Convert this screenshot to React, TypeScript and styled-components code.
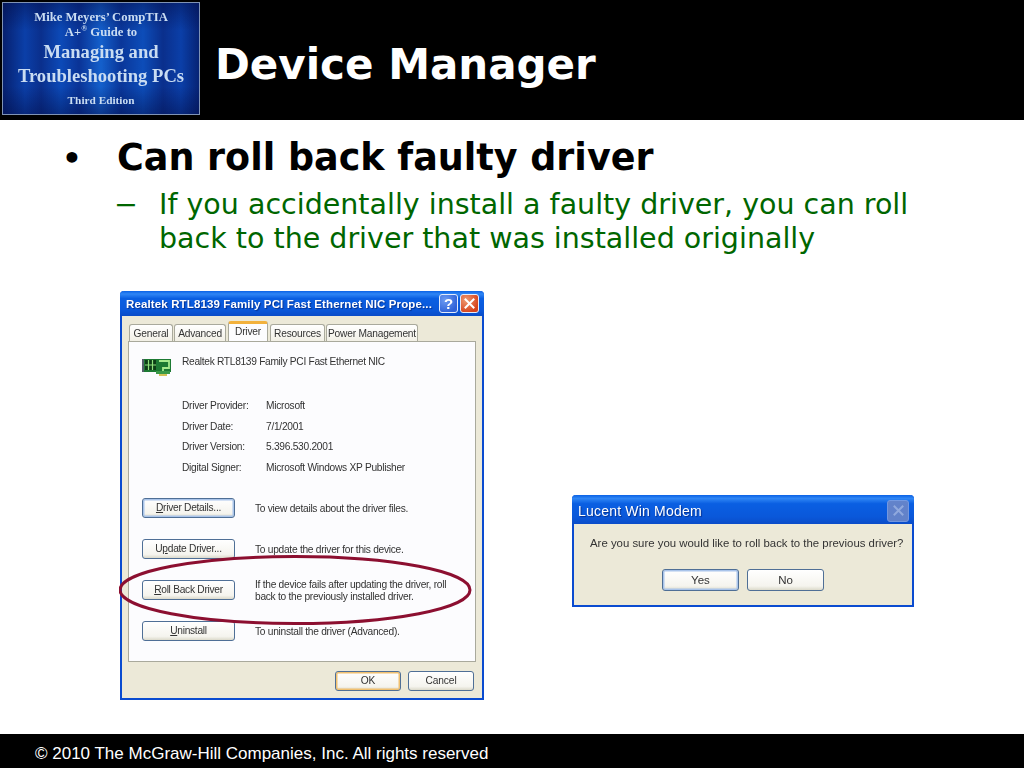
import React from 'react';
import styled, {createGlobalStyle, css} from 'styled-components';

const GlobalStyle = createGlobalStyle`
  html, body {
    margin: 0;
    padding: 0;
    background: #fff;
  }
`;

const XP_FONT = `"Liberation Sans", Arial, sans-serif`;

const Slide = styled.div`
  width: 1024px;
  height: 768px;
  background: #fff;
  display: flex;
  flex-direction: column;
  overflow: hidden;
  font-family: "DejaVu Sans", sans-serif;
`;

const Header = styled.header`
  height: 120px;
  background: #000;
  display: flex;
  align-items: flex-start;
  padding: 2px 0 0 2px;
  box-sizing: border-box;
`;

const Badge = styled.div`
  width: 198px;
  height: 113px;
  box-sizing: border-box;
  border: 1px solid #7f93b5;
  background:
    linear-gradient(180deg, rgba(2, 12, 70, 0.45) 0%, rgba(2, 12, 70, 0) 25%, rgba(2, 12, 70, 0) 75%, rgba(2, 12, 70, 0.45) 100%),
    linear-gradient(90deg,
      #06206f 0px, #0b3fa8 22px, #0a2f8c 38px, #0c4ab8 58px, #0a3396 76px,
      #1460cc 98px, #0a3699 118px, #0d4db9 140px, #0a2f8c 160px, #0b3fa8 178px, #06206f 198px);
  color: #c9dcf2;
  font-family: "Liberation Serif", serif;
  font-weight: bold;
  text-align: center;
  display: flex;
  flex-direction: column;
  align-items: center;
  padding-top: 7px;
  filter: blur(0.3px);
`;

const BadgeSmall = styled.div`
  font-size: 12.700px;
  line-height: 15px;
  white-space: nowrap;

  sup {
    font-size: 8px;
    line-height: 0;
  }
`;

const BadgeLarge = styled.div`
  font-size: 18.600px;
  line-height: 24px;
  white-space: nowrap;
`;

const BadgeEdition = styled.div`
  font-size: 11.300px;
  line-height: 14px;
  margin-top: 5px;
`;

const Title = styled.h1`
  margin: 0 0 0 15px;
  font-size: 42px;
  line-height: 50px;
  padding-top: 38px;
  color: #fff;
  font-weight: bold;
  white-space: nowrap;
`;

const Bullets = styled.section`
  padding: 15px 0 0 62px;
  height: 157px;
  box-sizing: border-box;
`;

const BulletRow = styled.div`
  display: flex;
  font-size: 36.500px;
  line-height: 46px;
  font-weight: bold;
  color: #000;
`;

const BulletMark = styled.span`
  width: 55px;
  flex: none;
  font-size: 31px;
`;

const SubRow = styled.div`
  display: flex;
  margin: 7px 0 0 52px;
  font-size: 28.500px;
  line-height: 34px;
  color: #006600;
`;

const SubMark = styled.span`
  width: 45px;
  flex: none;
`;

const Stage = styled.main`
  display: flex;
  align-items: flex-start;
  padding: 14px 0 0 120px;
  gap: 88px;
  flex: 1;
`;

const XpWindow = styled.div<{$width: number; $height: number; $offset?: number}>`
  width: ${p => p.$width}px;
  height: ${p => p.$height}px;
  flex: none;
  margin-top: ${p => p.$offset ?? 0}px;
  box-sizing: border-box;
  position: relative;
  background: #ece9d8;
  border: 2px solid #0a4bd0;
  border-top: 0;
  border-radius: 4px 4px 0 0;
  display: flex;
  flex-direction: column;
  font-family: ${XP_FONT};
  color: #333;
  filter: blur(0.35px);
`;

const TitleBar = styled.div<{$height: number; $dropped?: boolean}>`
  height: ${p => p.$height}px;
  box-sizing: border-box;
  flex: none;
  margin: 0 -2px;
  border-radius: 4px 4px 0 0;
  background: linear-gradient(180deg, #0a62e6 0%, #2f86f5 12%, #0a5fe2 30%, #0a58da 75%, #0a4cc8 100%);
  display: flex;
  align-items: center;
  padding: ${p => (p.$dropped ? 2 : 0)}px 5px 0 6px;
  color: #fff;
`;

const TitleText = styled.div<{$large?: boolean}>`
  flex: 1;
  min-width: 0;
  white-space: nowrap;
  font-weight: ${p => (p.$large ? 'normal' : 'bold')};
  font-size: ${p => (p.$large ? '14px' : '11.5px')};
  letter-spacing: ${p => (p.$large ? '0.2px' : '0.13px')};
  text-shadow: 1px 1px 1px rgba(0, 20, 90, 0.6);
`;

const CaptionButton = styled.div<{$kind: 'help' | 'close' | 'disabled'}>`
  width: 19px;
  height: 19px;
  flex: none;
  margin-left: 2px;
  border-radius: 3px;
  border: 1px solid #e4ecfb;
  box-sizing: border-box;
  display: flex;
  align-items: center;
  justify-content: center;
  color: #fff;
  font: bold 15px ${XP_FONT};
  ${p => p.$kind === 'help' && css`
    background: radial-gradient(circle at 30% 30%, #6d9cf2, #2f62d8 75%);
  `}
  ${p => p.$kind === 'close' && css`
    background: radial-gradient(circle at 30% 30%, #ee9a72, #d6431c 75%);
  `}
  ${p => p.$kind === 'disabled' && css`
    width: 22px;
    height: 22px;
    border-color: #7f9ee0;
    background: #6c87c8;
    opacity: 0.9;
  `}
`;

const Tabs = styled.div`
  display: flex;
  align-items: flex-end;
  height: 25px;
  padding: 6px 0 0 7px;
  box-sizing: border-box;
  flex: none;
`;

const Tab = styled.div<{$active?: boolean; $width: number}>`
  width: ${p => p.$width}px;
  height: ${p => (p.$active ? 20 : 17)}px;
  box-sizing: border-box;
  font-size: 10.200px;
  letter-spacing: -0.2px;
  line-height: 18px;
  text-align: center;
  white-space: nowrap;
  background: ${p => (p.$active ? '#fcfcfe' : 'linear-gradient(180deg, #fff, #f2f0e6)')};
  border: 1px solid #a9a99c;
  border-bottom: 0;
  border-radius: 3px 3px 0 0;
  margin-right: 1px;
  ${p => p.$active && css`
    border-top: 3px solid #f2b13c;
    line-height: 15px;
    margin: 0 2px 0 1px;
  `}
`;

const TabPanel = styled.div`
  margin: 0 6px;
  height: 321px;
  flex: none;
  box-sizing: border-box;
  background: #fcfcfe;
  border: 1px solid #a9a99c;
  padding: 14px 0 0 13px;
  font-size: 10.200px;
  letter-spacing: -0.27px;
`;

const DeviceRow = styled.div`
  display: flex;
  align-items: flex-start;
  gap: 10px;
  height: 43px;
  line-height: 12px;
  letter-spacing: -0.3px;
`;

const InfoGrid = styled.dl`
  margin: 0 0 0 40px;
  display: grid;
  grid-template-columns: 84px 1fr;
  grid-auto-rows: 20.700px;
  height: 84px;
  line-height: 14px;

  dt, dd {
    margin: 0;
    white-space: nowrap;
  }
`;

const ActionRow = styled.div`
  display: flex;
  align-items: center;
  height: 41px;
  line-height: 12px;
`;

const ActionList = styled.div`
  margin-top: 4px;
`;

const XpButton = styled.div<{$width: number; $tone?: 'focus' | 'default'}>`
  width: ${p => p.$width}px;
  height: 20px;
  flex: none;
  box-sizing: border-box;
  border: 1px solid #4f6f96;
  border-radius: 3px;
  background: linear-gradient(180deg, #fff 0%, #f5f4ee 80%, #dcdacb 100%);
  text-align: center;
  line-height: 17px;
  white-space: nowrap;
  ${p => p.$tone === 'focus' && css`
    box-shadow: inset 0 0 0 1.500px #a9c4ea;
  `}
  ${p => p.$tone === 'default' && css`
    box-shadow: inset 0 0 0 1.500px #f0c070;
  `}

  u {
    text-underline-offset: 1px;
  }
`;

const ActionText = styled.div`
  margin-left: 20px;
  padding-top: 2px;
  white-space: nowrap;
`;

const WindowFooter = styled.div`
  display: flex;
  justify-content: flex-end;
  gap: 7px;
  padding: 9px 8px 0 0;
  font-size: 10.200px;
  letter-spacing: -0.1px;
`;

const Oval = styled.svg`
  position: absolute;
  left: -3px;
  top: 262px;
`;

const Prompt = styled.div`
  font-size: 11.400px;
  line-height: 14px;
  padding: 12px 0 0 16px;
  white-space: nowrap;
`;

const PromptButtons = styled.div`
  display: flex;
  gap: 8px;
  padding: 19px 0 0 88px;
  font-size: 11.500px;

  ${XpButton} {
    height: 22px;
    line-height: 20px;
  }
`;

const Footer = styled.footer`
  height: 34px;
  flex: none;
  background: #000;
  color: #fff;
  font-family: "Liberation Sans", Arial, sans-serif;
  font-size: 17px;
  line-height: 39px;
  padding-left: 35px;
`;

const NicIcon = () => (
  <svg width="30" height="20" viewBox="0 0 30 20" style={{flex: 'none', marginTop: '2px'}}>
    <rect x="0" y="1" width="29" height="13" fill="#1d7a33" />
    <rect x="14" y="13" width="14" height="3" fill="#3a9a48" />
    <rect x="17" y="16" width="8" height="2" fill="#d2c255" />
    <rect x="3" y="2" width="11" height="10" fill="#0c3d16" />
    <path d="M6.500 2v10M10.500 2v10M3 7h11" stroke="#8ee07a" strokeWidth="1.200" />
    <path d="M17 3h10v7h-6v3" stroke="#a6ea8c" strokeWidth="1.800" fill="none" />
    <rect x="0" y="1" width="2" height="13" fill="#55606a" />
  </svg>
);

const CloseGlyph = ({color = '#fff'}: {color?: string}) => (
  <svg width="11" height="11" viewBox="0 0 11 11">
    <path d="M1.500 1.500l8 8M9.500 1.500l-8 8" stroke={color} strokeWidth="2" strokeLinecap="square" />
  </svg>
);

const ACTIONS = [
  {label: <><u>D</u>river Details...</>, text: 'To view details about the driver files.', tone: 'focus' as const},
  {label: <>U<u>p</u>date Driver...</>, text: 'To update the driver for this device.'},
  {
    label: <><u>R</u>oll Back Driver</>,
    text: <>If the device fails after updating the driver, roll<br />back to the previously installed driver.</>
  },
  {label: <><u>U</u>ninstall</>, text: 'To uninstall the driver (Advanced).'}
];

const INFO = [
  ['Driver Provider:', 'Microsoft'],
  ['Driver Date:', '7/1/2001'],
  ['Driver Version:', '5.396.530.2001'],
  ['Digital Signer:', 'Microsoft Windows XP Publisher']
];

const TABS = [
  {name: 'General', width: 44},
  {name: 'Advanced', width: 52},
  {name: 'Driver', width: 40, active: true},
  {name: 'Resources', width: 55},
  {name: 'Power Management', width: 92}
];

const App: React.FC = () => (
  <Slide>
    <GlobalStyle />
    <Header>
      <Badge>
        <BadgeSmall>Mike Meyers’ CompTIA</BadgeSmall>
        <BadgeSmall>A+<sup>®</sup> Guide to</BadgeSmall>
        <BadgeLarge>Managing and</BadgeLarge>
        <BadgeLarge>Troubleshooting PCs</BadgeLarge>
        <BadgeEdition>Third Edition</BadgeEdition>
      </Badge>
      <Title>Device Manager</Title>
    </Header>
    <Bullets>
      <BulletRow>
        <BulletMark>•</BulletMark>
        Can roll back faulty driver
      </BulletRow>
      <SubRow>
        <SubMark>−</SubMark>
        <div>
          If you accidentally install a faulty driver, you can roll
          <br />
          back to the driver that was installed originally
        </div>
      </SubRow>
    </Bullets>
    <Stage>
      <XpWindow $width={364} $height={409}>
        <TitleBar $height={25}>
          <TitleText>Realtek RTL8139 Family PCI Fast Ethernet NIC Prope...</TitleText>
          <CaptionButton $kind="help">?</CaptionButton>
          <CaptionButton $kind="close"><CloseGlyph /></CaptionButton>
        </TitleBar>
        <Tabs>
          {TABS.map(tab => (
            <Tab key={tab.name} $width={tab.width} $active={tab.active}>{tab.name}</Tab>
          ))}
        </Tabs>
        <TabPanel>
          <DeviceRow>
            <NicIcon />
            <span>Realtek RTL8139 Family PCI Fast Ethernet NIC</span>
          </DeviceRow>
          <InfoGrid>
            {INFO.map(([label, value]) => (
              <React.Fragment key={label}>
                <dt>{label}</dt>
                <dd>{value}</dd>
              </React.Fragment>
            ))}
          </InfoGrid>
          <ActionList>
            {ACTIONS.map((action, index) => (
              <ActionRow key={index}>
                <XpButton $width={93} $tone={action.tone}>{action.label}</XpButton>
                <ActionText>{action.text}</ActionText>
              </ActionRow>
            ))}
          </ActionList>
        </TabPanel>
        <WindowFooter>
          <XpButton $width={66} $tone="default">OK</XpButton>
          <XpButton $width={66}>Cancel</XpButton>
        </WindowFooter>
        <Oval width="356" height="74" viewBox="0 0 356 74">
          <ellipse cx="176" cy="37" rx="175" ry="33.500" fill="none" stroke="#8c0f30" strokeWidth="3" />
        </Oval>
      </XpWindow>
      <XpWindow $width={342} $height={112} $offset={204}>
        <TitleBar $height={29} $dropped>
          <TitleText $large>Lucent Win Modem</TitleText>
          <CaptionButton $kind="disabled"><CloseGlyph color="#9fb2de" /></CaptionButton>
        </TitleBar>
        <Prompt>Are you sure you would like to roll back to the previous driver?</Prompt>
        <PromptButtons>
          <XpButton $width={77} $tone="focus">Yes</XpButton>
          <XpButton $width={77}>No</XpButton>
        </PromptButtons>
      </XpWindow>
    </Stage>
    <Footer>© 2010 The McGraw-Hill Companies, Inc. All rights reserved</Footer>
  </Slide>
);

export default App;
